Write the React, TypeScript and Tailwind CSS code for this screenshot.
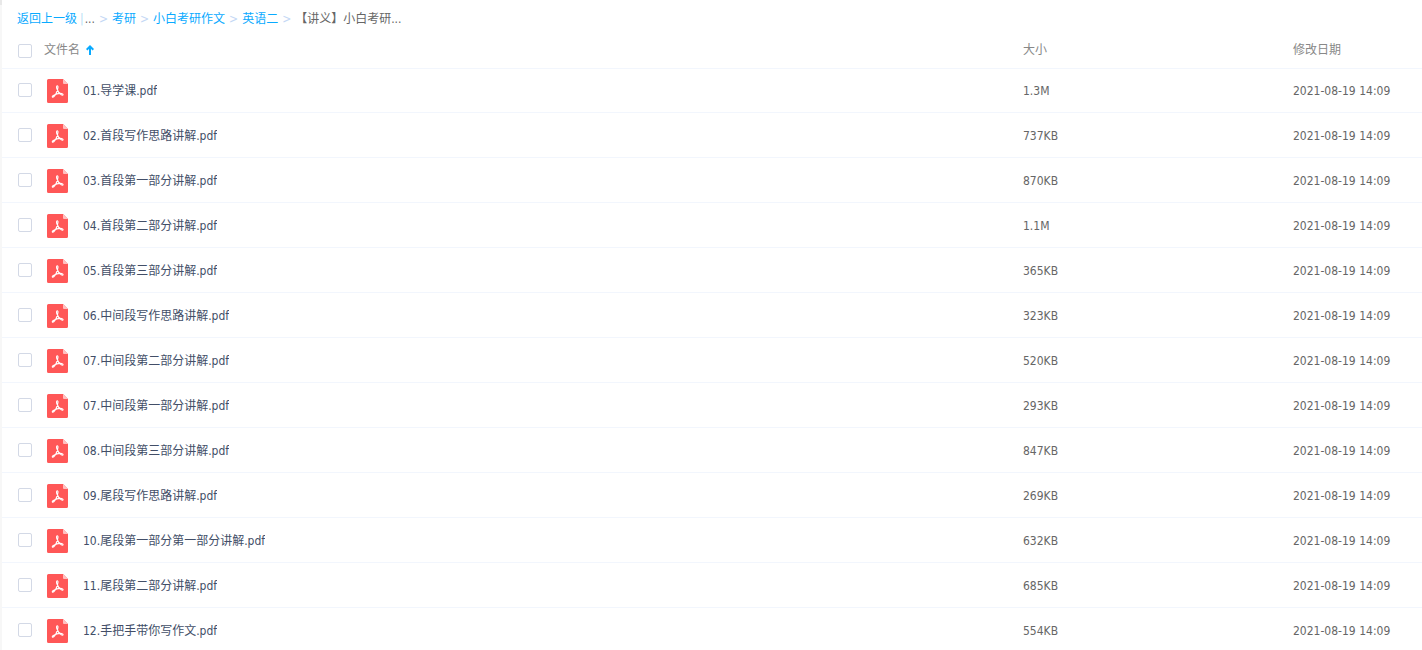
const files = [
  { name: "01.导学课.pdf", size: "1.3M" },
  { name: "02.首段写作思路讲解.pdf", size: "737KB" },
  { name: "03.首段第一部分讲解.pdf", size: "870KB" },
  { name: "04.首段第二部分讲解.pdf", size: "1.1M" },
  { name: "05.首段第三部分讲解.pdf", size: "365KB" },
  { name: "06.中间段写作思路讲解.pdf", size: "323KB" },
  { name: "07.中间段第二部分讲解.pdf", size: "520KB" },
  { name: "07.中间段第一部分讲解.pdf", size: "293KB" },
  { name: "08.中间段第三部分讲解.pdf", size: "847KB" },
  { name: "09.尾段写作思路讲解.pdf", size: "269KB" },
  { name: "10.尾段第一部分第一部分讲解.pdf", size: "632KB" },
  { name: "11.尾段第二部分讲解.pdf", size: "685KB" },
  { name: "12.手把手带你写作文.pdf", size: "554KB" },
];

const modified = "2021-08-19 14:09";

const PdfIcon = () => (
  <svg width="21" height="24" viewBox="0 0 21 24" className="shrink-0" aria-hidden="true">
    <path d="M1.500 0H16l5 5v17.500a1.500 1.500 0 0 1-1.500 1.500h-18A1.500 1.500 0 0 1 0 22.500v-21A1.500 1.500 0 0 1 1.500 0Z" fill="#ff5757" />
    <path d="M16 0l5 5h-4a1 1 0 0 1-1-1V0Z" fill="#ffc0c0" />
    <path
      d="M10.300 6.800C9.200 6.800 9.400 8.500 10.100 10.300C11 12.700 12.500 14.800 14.300 15.900C15.600 16.700 16.600 15.900 15.800 15.200C14.600 14.200 11 14.500 8.300 15.500C6.300 16.300 5 17.200 5.300 17.900C5.800 18.800 7.500 17.500 8.700 15.300C9.900 13.100 10.900 10.300 11 8.300C11 7.400 10.800 6.800 10.300 6.800Z"
      fill="none"
      stroke="#fff"
      strokeWidth="1.1"
      strokeLinejoin="round"
    />
  </svg>
);

const Checkbox = ({ label }: { label: string }) => (
  <input
    type="checkbox"
    aria-label={label}
    className="block size-3.5 shrink-0 appearance-none rounded-xs border border-[#d3d9e6] bg-white checked:border-[#09aaff] checked:bg-[#09aaff]"
  />
);

const Separator = () => <span className="px-1 text-[#c4d8f5]">&gt;</span>;

const App = () => {
  return (
    <div className="flex min-h-screen bg-white font-['DejaVu_Sans_Condensed','Noto_Sans_CJK_SC',sans-serif] text-xs text-[#666]">
      <div className="w-0.5 shrink-0 border-t-5 border-[#e8e8e8] bg-[#f7f7f7]" />

      <main className="min-w-0 flex-1">
        <nav className="flex items-center pt-[9px] pb-0.5 pl-[15px] leading-5 whitespace-nowrap">
          <a href="#" className="text-[#09aaff]">返回上一级</a>
          <span className="pr-px pl-[3px] text-[#b5dcf5]">|</span>
          <span>...</span>
          <Separator />
          <a href="#" className="text-[#09aaff]">考研</a>
          <Separator />
          <a href="#" className="text-[#09aaff]">小白考研作文</a>
          <Separator />
          <a href="#" className="text-[#09aaff]">英语二</a>
          <Separator />
          <span>【讲义】小白考研...</span>
        </nav>

        <table className="w-full table-fixed border-separate border-spacing-0 text-left">
          <thead>
            <tr className="text-[#888]">
              <th className="h-[38px] border-b border-[#f2f6fd] p-0 pl-4 font-normal">
                <div className="flex items-center">
                  <div className="pt-0.5">
                    <Checkbox label="全选" />
                  </div>
                  <button type="button" className="ml-3 flex items-center gap-1.5">
                    文件名
                    <svg width="8" height="10" viewBox="0 0 8 10" aria-hidden="true">
                      <path d="M4 10V2M.7 4.800 4 1.500 7.300 4.800" fill="none" stroke="#09aaff" strokeWidth="2" />
                    </svg>
                  </button>
                </div>
              </th>
              <th className="w-[270px] border-b border-[#f2f6fd] p-0 font-normal">大小</th>
              <th className="w-[129px] border-b border-[#f2f6fd] p-0 font-normal">修改日期</th>
            </tr>
          </thead>
          <tbody>
            {files.map((file) => (
              <tr key={file.name} className="group">
                <td className="h-[45px] border-b border-[#f2f6fd] p-0 pt-0.5 pl-4 group-first:h-11 group-first:pt-px">
                  <div className="flex items-center">
                    <div className="pb-0.5">
                      <Checkbox label={file.name} />
                    </div>
                    <span className="ml-[15px]">
                      <PdfIcon />
                    </span>
                    <a href="#" className="ml-[15px] truncate pb-px text-[#424e67]">{file.name}</a>
                  </div>
                </td>
                <td className="border-b border-[#f2f6fd] p-0 pt-0.5 group-first:pt-px">{file.size}</td>
                <td className="border-b border-[#f2f6fd] p-0 pt-0.5 whitespace-nowrap group-first:pt-px">{modified}</td>
              </tr>
            ))}
          </tbody>
        </table>
      </main>
    </div>
  );
};

export default App;
